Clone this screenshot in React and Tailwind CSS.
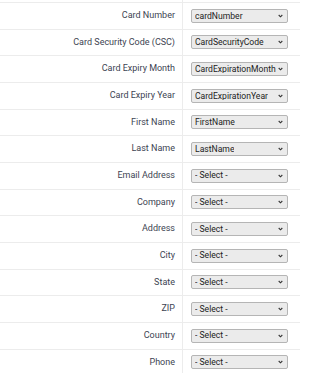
import React from "react";

const fields = [
  { label: "Card Number", value: "cardNumber" },
  { label: "Card Security Code (CSC)", value: "CardSecurityCode" },
  { label: "Card Expiry Month", value: "CardExpirationMonth" },
  { label: "Card Expiry Year", value: "CardExpirationYear" },
  { label: "First Name", value: "FirstName" },
  { label: "Last Name", value: "LastName" },
  { label: "Email Address", value: "- Select -" },
  { label: "Company", value: "- Select -" },
  { label: "Address", value: "- Select -" },
  { label: "City", value: "- Select -" },
  { label: "State", value: "- Select -" },
  { label: "ZIP", value: "- Select -" },
  { label: "Country", value: "- Select -" },
  { label: "Phone", value: "- Select -" },
];

function Chevron() {
  return (
    <svg width="5" height="4" viewBox="0 0 5 4" className="shrink-0">
      <path d="M0.7 1 L2.5 2.8 L4.3 1" fill="none" stroke="#333" strokeWidth="1.1" />
    </svg>
  );
}

function FieldRow({ label, value }) {
  return (
    <div className="grid grid-cols-[183px_1fr] h-[26.67px] border-b border-[#ececec]">
      <div className="flex items-center justify-end pr-[7px] border-r border-[#ececec] text-[9px] text-[#3d4452]">
        {label}
      </div>
      <div className="flex items-center pl-[8px]">
        <div className="flex items-center justify-between gap-[2px] w-[97px] h-[14px] pl-[3px] pr-[4px] rounded-[2px] border border-[#b5b5b5] bg-[#ebebeb] text-[8.6px] text-[#222] leading-none whitespace-nowrap">
          <span className="overflow-hidden">{value}</span>
          <Chevron />
        </div>
      </div>
    </div>
  );
}

export default function App() {
  return (
    <div className="w-[300px] h-[373px] overflow-hidden bg-white font-['Roboto',sans-serif]">
      <div className="grid grid-cols-[183px_1fr] h-[3px] border-b border-[#ececec]">
        <div className="border-r border-[#ececec]" />
        <div />
      </div>
      {fields.map((f) => (
        <FieldRow key={f.label} label={f.label} value={f.value} />
      ))}
    </div>
  );
}
